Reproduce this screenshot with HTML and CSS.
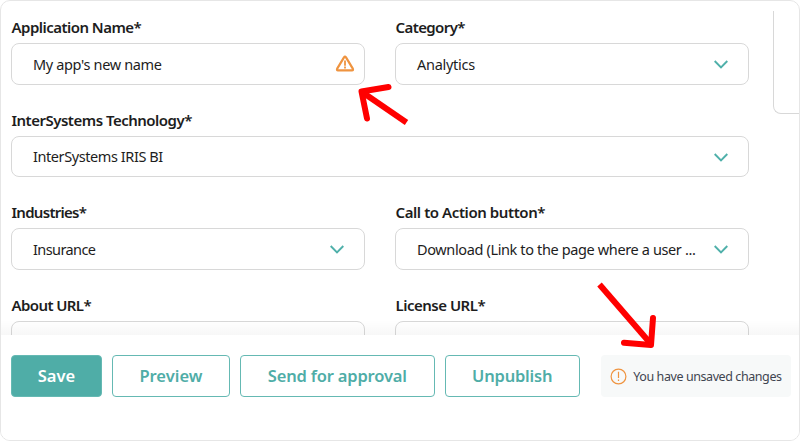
FILE: index.html
```html
<!DOCTYPE html>
<html lang="en">
<head>
<meta charset="utf-8">
<title>Edit application</title>
<link rel="stylesheet" href="styles.css">
</head>
<body>
<main class="frame">
  <div class="content">
    <form class="form">
      <div class="field"><label class="label l-app">Application Name*</label>
        <div class="control"><span class="value v-app">My app's new name</span>
          <svg class="warning" width="20" height="18" viewBox="0 0 20 18"><path d="M9 2.4Q10 1 11 2.4L17.8 13.6Q18.5 15.4 17 15.4H3Q1.500 15.4 2.200 13.6Z" fill="none" stroke="#ef9440" stroke-width="2.200" stroke-linejoin="round"/><path d="M10 5.600V10.700M10 11.600V13.400" stroke="#ef9440" stroke-width="1.800"/></svg></div></div>
      <div class="field"><label class="label l-cat">Category*</label>
        <div class="control"><span class="value v-ana">Analytics</span>
          <svg class="chevron" width="14" height="9" viewBox="0 0 14 9"><path d="M.7 1L7 7.4L13.3 1"/></svg></div></div>
      <div class="field wide"><label class="label l-tech">InterSystems Technology*</label>
        <div class="control"><span class="value v-iris">InterSystems IRIS BI</span>
          <svg class="chevron" width="14" height="9" viewBox="0 0 14 9"><path d="M.7 1L7 7.4L13.3 1"/></svg></div></div>
      <div class="field"><label class="label l-ind">Industries*</label>
        <div class="control"><span class="value v-ins">Insurance</span>
          <svg class="chevron" width="14" height="9" viewBox="0 0 14 9"><path d="M.7 1L7 7.4L13.3 1"/></svg></div></div>
      <div class="field"><label class="label l-cta">Call to Action button*</label>
        <div class="control"><span class="value v-down">Download (Link to the page where a user ...</span>
          <svg class="chevron" width="14" height="9" viewBox="0 0 14 9"><path d="M.7 1L7 7.4L13.3 1"/></svg></div></div>
      <div class="field"><label class="label l-about">About URL*</label><div class="control"></div></div>
      <div class="field"><label class="label l-lic">License URL*</label><div class="control"></div></div>
    </form>
    <aside class="side"></aside>
  </div>
  <footer class="footer">
    <button class="btn primary b-save">Save</button>
    <button class="btn b-prev">Preview</button>
    <button class="btn b-send">Send for approval</button>
    <button class="btn b-unp">Unpublish</button>
    <div class="notice">
      <svg width="17" height="17" viewBox="0 0 17 17"><circle cx="8.5" cy="8.5" r="7.4" fill="none" stroke="#ef9440" stroke-width="1.2"/><path d="M8.5 3.7V10.1M8.5 11.4V13" stroke="#ef9440" stroke-width="1.2"/></svg>
      <span class="notice-text">You have unsaved changes</span>
    </div>
  </footer>
  <svg class="arrows" width="800" height="441" viewBox="0 0 800 441">
    <g fill="none" stroke="#f00" stroke-width="6" stroke-linejoin="round">
      <path d="M406.5 122.5L362 92"/><path d="M388.5 87L361.5 91.5L367 118.5" stroke-linecap="round"/>
      <path d="M599.5 284.5L651 344"/><path d="M653 318L651 345L624 342.8" stroke-linecap="round"/>
    </g>
  </svg>
</main>
</body>
</html>
```
FILE: styles.css
```css
* { box-sizing: border-box; }
body { margin: 0; background: #fff; font-family: "Noto Sans", sans-serif; color: #1d1d1d; }
.frame { position: relative; width: 800px; height: 441px; border: 1px solid #e6e6e6; border-radius: 10px; overflow: hidden; display: flex; flex-direction: column; }
.content { height: 334px; display: flex; gap: 24px; overflow: hidden; padding: 10px 0 0 10px; flex: none; position: relative; }
.content::after { content: ""; position: absolute; inset: auto 0 0; height: 15px; background: linear-gradient(transparent, rgba(0, 0, 0, .03)); }
.form { width: 738px; flex: none; display: grid; grid-template-columns: 354px 354px; column-gap: 30px; grid-auto-rows: 92.6px; }
.wide { grid-column: 1 / 3; }
.label { display: block; height: 32px; line-height: 32px; padding-left: .5px; font-size: 15px; font-weight: 600; white-space: nowrap; letter-spacing: -.5px; }
.l-app { letter-spacing: -.53px; }
.l-cat { letter-spacing: -.6px; }
.l-ind { letter-spacing: -.72px; }
.l-cta { letter-spacing: -.42px; }
.l-about { letter-spacing: -.6px; }
.control { height: 41.6px; border: 1px solid #d8d8d8; border-radius: 8px; display: flex; align-items: center; justify-content: space-between; padding: 0 20.5px 0 21px; }
.value { font-size: 14.5px; line-height: 20px; white-space: nowrap; }
.v-app { letter-spacing: -.35px; }
.v-ana { letter-spacing: -.28px; }
.v-iris { letter-spacing: -.42px; }
.v-ins { letter-spacing: -.6px; }
.v-down { letter-spacing: -.37px; }
.warning { margin-right: -11px; }
.chevron { position: relative; top: .7px; }
.chevron path { fill: none; stroke: #4fb0aa; stroke-width: 1.9; }
.side { flex: 1; height: 103px; border: solid #d8d8d8; border-width: 0 0 1px 1px; border-radius: 0 0 0 8px; }
.footer { flex: 1; display: flex; align-items: flex-start; gap: 10px; padding: 20px 8px 0 10px; background: #fff; }
.btn { height: 42px; padding: 0 0 1px; border: 1px solid #65b9b3; border-radius: 4px; background: #fff; color: #4fada7; font: 600 16.5px "Noto Sans", sans-serif; white-space: nowrap; }
.primary { background: #4fada7; color: #fff; }
.b-save { width: 91px; }
.b-prev { width: 118px; }
.b-send { width: 195px; letter-spacing: -.18px; }
.b-unp { width: 135px; letter-spacing: -.2px; }
.notice { margin-left: 11px; width: 190.5px; height: 42px; border-radius: 4px; background: #f7f9f9; display: flex; align-items: center; gap: 6px; padding-left: 9.7px; }
.notice-text { font-size: 12.5px; color: #3f4550; white-space: nowrap; letter-spacing: -.42px; }
.arrows { position: absolute; left: -1px; top: -1px; }
```
